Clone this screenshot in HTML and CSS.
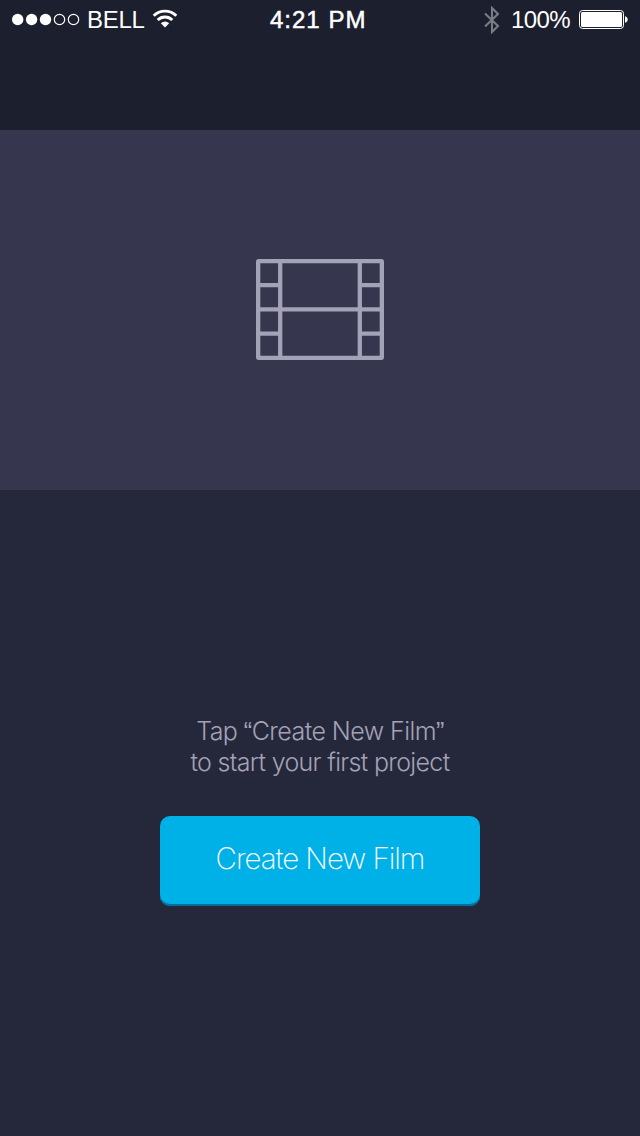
FILE: index.html
```
<!DOCTYPE html>
<html lang="en">
<head>
<meta charset="utf-8">
<title>Create New Film</title>
<link rel="stylesheet" href="styles.css">
</head>
<body>
<main class="screen">
  <header class="top">
    <div class="status">
      <div class="status-left">
        <svg class="signal" width="68" height="14" viewBox="0 0 68 14">
          <g fill="#fff"><circle cx="5.700" cy="6.500" r="5.7"/><circle cx="19.600" cy="6.500" r="5.7"/><circle cx="33.500" cy="6.500" r="5.7"/></g>
          <g fill="none" stroke="#fff" stroke-width="1.200"><circle cx="47.500" cy="6.500" r="5.2"/><circle cx="61.500" cy="6.500" r="5.2"/></g>
        </svg>
        <span class="carrier">BELL</span>
        <svg class="wifi" width="26" height="20" viewBox="0 0 26 20">
          <path d="M1.7 6.8a16 16 0 0 1 22.6 0" fill="none" stroke="#fff" stroke-width="2.9"/>
          <path d="M5.7 11a10.3 10.3 0 0 1 14.6 0" fill="none" stroke="#fff" stroke-width="2.9"/>
          <path d="M13 18.6 8.8 14.2a6 6 0 0 1 8.4 0Z" fill="#fff"/>
        </svg>
      </div>
      <span class="time">4:21 PM</span>
      <div class="status-right">
        <svg class="bluetooth" width="16" height="28" viewBox="0 0 16 28">
          <path d="M1 7.5 14 20 8 26V2L14 8 1 20.5" fill="none" stroke="#7b7d86" stroke-width="2.100"/>
        </svg>
        <span class="percent">100%</span>
        <svg class="battery" width="49" height="20" viewBox="0 0 49 20">
          <rect x=".5" y=".5" width="44" height="18" rx="3" fill="none" stroke="#fff"/>
          <rect x="2" y="2" width="41" height="15" rx="1.5" fill="#fff"/>
          <path d="M46 6.2c3.6.8 3.6 5.800 0 6.600Z" fill="#fff"/>
        </svg>
      </div>
    </div>
  </header>
  <section class="preview">
    <svg class="film" width="128" height="101" viewBox="0 0 128 101" fill="none" stroke="#a3a2b7" stroke-width="4.300">
      <rect x="2.150" y="2.150" width="123.700" height="96.700" rx=".5"/>
      <path d="M24.200 2V99M103.800 2V99M2 50.400H126M2 26.200H24M2 74.600H24M104 26.200H126M104 74.600H126"/>
    </svg>
  </section>
  <section class="intro">
    <p class="hint"><span class="hint-a">Tap <span class="quote">“</span>Create New Film<span class="quote">”</span></span><br><span class="hint-b">to start your first project</span></p>
    <button class="create"><span class="create-label">Create New Film</span></button>
  </section>
</main>
</body>
</html>
```
FILE: styles.css
```
* { box-sizing: border-box; }
body { margin: 0; background: #25283a; font-family: Inter, "Liberation Sans", sans-serif; }
.screen { width: 640px; height: 1136px; display: flex; flex-direction: column; background: #25283a; }
.top { height: 130px; background: #1c1f2d; }
.status { height: 40px; padding: 0 12px; display: grid; grid-template-columns: 230px 1fr 230px; align-items: center; color: #fff; font-family: "Liberation Sans", Arial, sans-serif; font-size: 24px; line-height: 40px; white-space: nowrap; }
.status-left, .status-right { display: flex; align-items: center; height: 40px; }
.status-right { justify-content: flex-end; }
.carrier { margin-left: 7px; letter-spacing: -.3px; }
.wifi { margin: -2px 0 0 7.500px; }
.time { justify-self: start; margin-left: 28px; letter-spacing: 1px; -webkit-text-stroke: .5px #fff; }
.bluetooth { margin-right: 11px; }
.percent { margin-right: 9px; letter-spacing: -.6px; }
.battery { flex: none; }
.preview { height: 360px; display: flex; justify-content: center; padding-top: 129px; background: #36374e; }
.film { display: block; }
.intro { flex: 1; display: flex; flex-direction: column; align-items: center; padding-top: 226px; }
.hint { margin: 0 0 38px; height: 62px; text-align: center; color: #a3a2b7; font-size: 25px; font-weight: 300; line-height: 31px; white-space: nowrap; }
.hint-a { letter-spacing: -.55px; }
.hint-b { letter-spacing: -.68px; }
.quote { font-family: "Liberation Sans", Arial, sans-serif; }
.create { width: 320px; height: 90px; padding: 0 0 6px; border: 0; border-radius: 10px; background: #00b1e8; box-shadow: inset 0 -2px #017197; color: #fff; font-family: inherit; font-size: 29.500px; font-weight: 200; line-height: 36px; white-space: nowrap; }
.create-label { letter-spacing: -1.050px; }
```
